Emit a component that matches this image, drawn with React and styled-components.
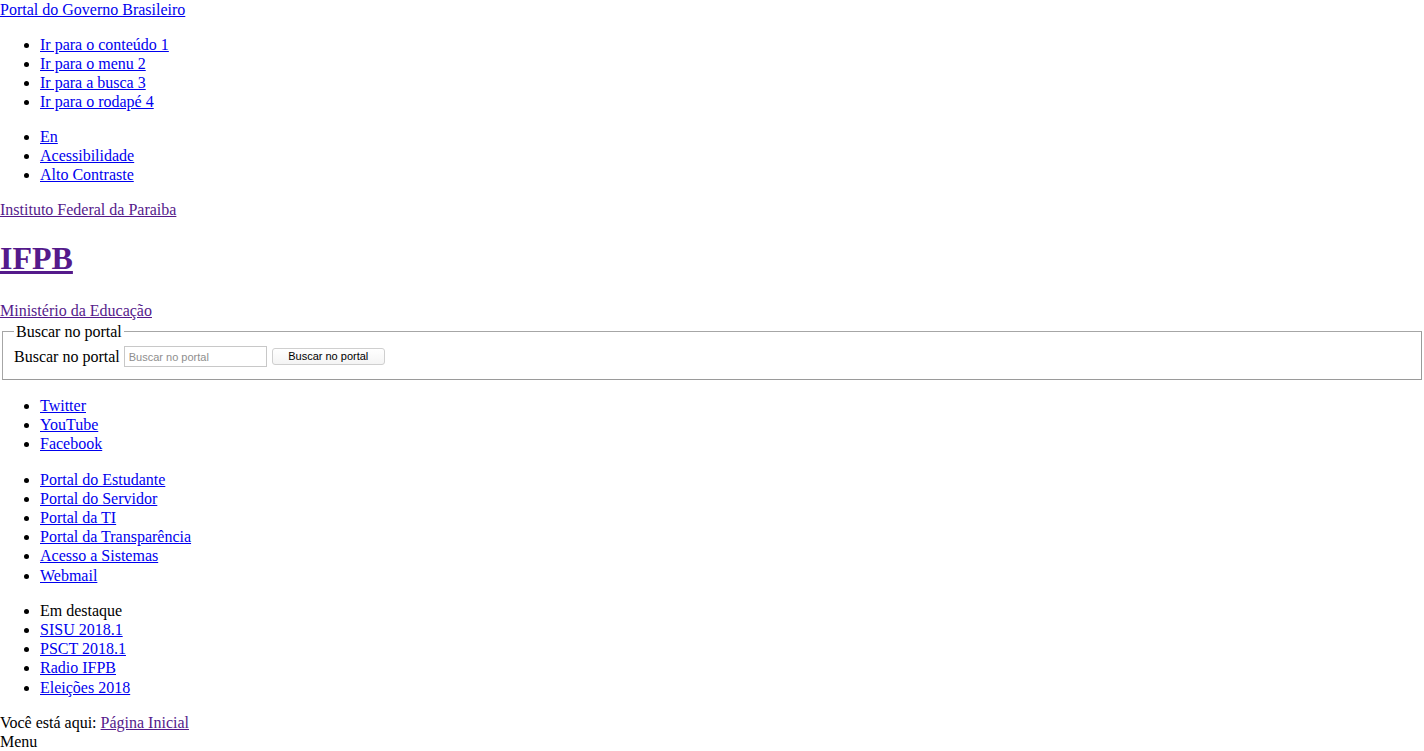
import React from "react";
import styled, { createGlobalStyle } from "styled-components";

const Global = createGlobalStyle`
  body {
    margin: 0;
    font-family: "Liberation Serif", "Times New Roman", serif;
    font-size: 16px;
    line-height: 19px;
    color: #000;
    background: #fff;
  }
`;

const Link = styled.a`
  color: ${(p) => (p.$visited ? "#551a8b" : "#0000ee")};
  text-decoration: underline;
  cursor: pointer;
`;

const Block = styled.div`
  margin: ${(p) => p.$margin || "0"};
`;

const Section = styled.div`
  line-height: 19.2px;
`;

const List = styled.ul`
  margin: 16px 0;
  padding-left: 40px;
  list-style: disc;
`;

const Title = styled.h1`
  font-size: 32px;
  line-height: 37px;
  font-weight: 700;
  margin: 21px 0 24px;
`;

const Fieldset = styled.fieldset`
  margin: 2px 2px 0;
  padding: 5px 11px 12px;
  border: 1px solid #a6a6a6;
  border-right-color: #9a9a9a;
  border-bottom-color: #9a9a9a;
`;

const Legend = styled.legend`
  padding: 0 2px;
`;

const Row = styled.div`
  display: flex;
  align-items: center;
  height: 21px;
`;

const SearchInput = styled.input`
  width: 143px;
  height: 21px;
  box-sizing: border-box;
  border: 1px solid #c8c8c8;
  padding: 1px 4px;
  margin: 0 0 0 4px;
  font-family: "Liberation Sans", Arial, sans-serif;
  font-size: 11px;
  &::placeholder {
    color: #8e8e8e;
  }
`;

const SearchButton = styled.button`
  width: 113px;
  height: 17px;
  box-sizing: border-box;
  margin: 0 0 0 5px;
  border: 1px solid #cfcfcf;
  border-radius: 3px;
  background: linear-gradient(#fff, #f4f4f4);
  font-family: "Liberation Sans", Arial, sans-serif;
  font-size: 11px;
  line-height: 13px;
  padding: 0;
  color: #000;
`;

const Item = ({ children, href = "#", plain }) => (
  <li>{plain ? children : <Link href={href}>{children}</Link>}</li>
);

export default function App() {
  return (
    <>
      <Global />
      <Block>
        <Link href="#">Portal do Governo Brasileiro</Link>
      </Block>
      <List>
        <Item>Ir para o conteúdo 1</Item>
        <Item>Ir para o menu 2</Item>
        <Item>Ir para a busca 3</Item>
        <Item>Ir para o rodapé 4</Item>
      </List>
      <List>
        <Item>En</Item>
        <Item>Acessibilidade</Item>
        <Item>Alto Contraste</Item>
      </List>
      <Block $margin="16px 0 0">
        <Link $visited href="#">
          Instituto Federal da Paraiba
        </Link>
      </Block>
      <Title>
        <Link $visited href="#">
          IFPB
        </Link>
      </Title>
      <Block>
        <Link $visited href="#">
          Ministério da Educação
        </Link>
      </Block>
      <form onSubmit={(e) => e.preventDefault()}>
        <Fieldset>
          <Legend>Buscar no portal</Legend>
          <Row>
            <label htmlFor="busca">Buscar no portal</label>
            <SearchInput id="busca" placeholder="Buscar no portal" />
            <SearchButton type="submit">Buscar no portal</SearchButton>
          </Row>
        </Fieldset>
      </form>
      <Section>
        <List>
          <Item>Twitter</Item>
          <Item>YouTube</Item>
          <Item>Facebook</Item>
        </List>
        <List>
          <Item>Portal do Estudante</Item>
          <Item>Portal do Servidor</Item>
          <Item>Portal da TI</Item>
          <Item>Portal da Transparência</Item>
          <Item>Acesso a Sistemas</Item>
          <Item>Webmail</Item>
        </List>
        <List>
          <Item plain>Em destaque</Item>
          <Item>SISU 2018.1</Item>
          <Item>PSCT 2018.1</Item>
          <Item>Radio IFPB</Item>
          <Item>Eleições 2018</Item>
        </List>
        <Block>
          Você está aqui:{" "}
          <Link $visited href="#">
            Página Inicial
          </Link>
        </Block>
        <Block>Menu</Block>
      </Section>
    </>
  );
}
